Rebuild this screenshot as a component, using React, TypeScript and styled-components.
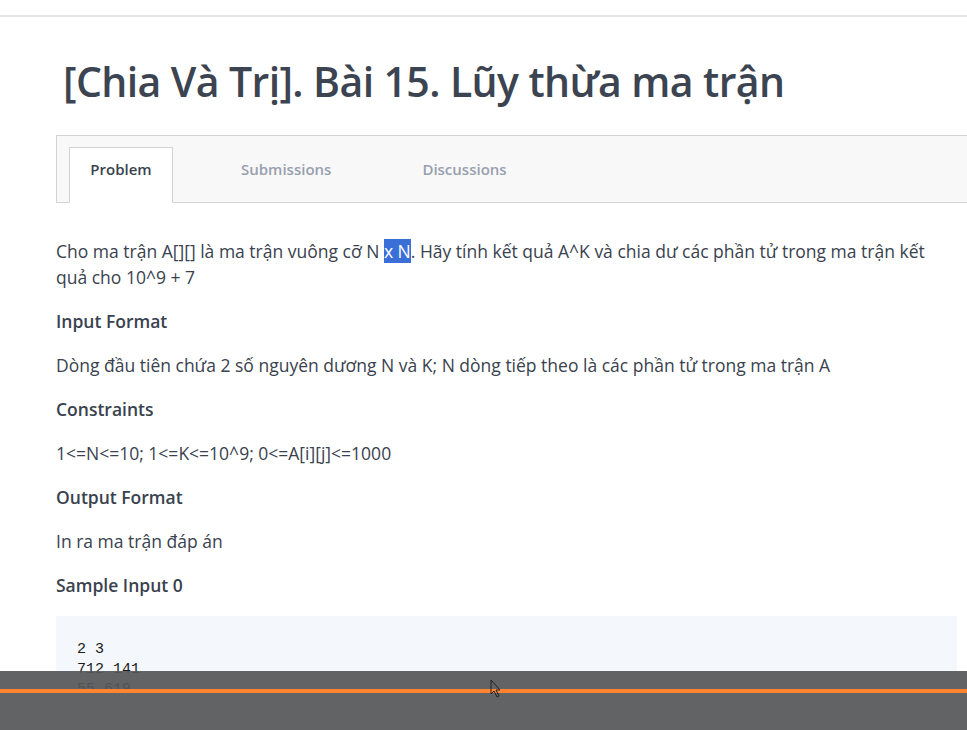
import React from "react";
import styled, { createGlobalStyle } from "styled-components";

const Global = createGlobalStyle`
  html, body { margin: 0; padding: 0; background: #ffffff; }
  body { font-family: "Open Sans", "Noto Sans", sans-serif; overflow: hidden; }
`;

const Page = styled.div`
  width: 967px;
  height: 730px;
  position: relative;
  overflow: hidden;
  background: #fff;
`;

const TopRule = styled.div`
  height: 15px;
  border-bottom: 2px solid #e6e6e6;
`;

const Content = styled.main`
  padding: 0 0 0 56px;
`;

const Title = styled.h1`
  margin: 36px 0 0 7px;
  font-size: 41px;
  font-weight: 600;
  color: #3b4450;
  line-height: 56px;
  letter-spacing: -0.6px;
`;

const TabBar = styled.nav`
  margin-top: 26px;
  height: 66px;
  border: 1px solid #d3d3d3;
  border-right: none;
  background: #f8f8f8;
  display: flex;
  align-items: flex-end;
  padding-left: 12px;
`;

const Tab = styled.div<{ $active?: boolean; $gap?: number }>`
  width: ${(p) => (p.$active ? "104px" : "auto")};
  height: 56px;
  margin-bottom: -1px;
  margin-left: ${(p) => p.$gap ?? 0}px;
  box-sizing: border-box;
  display: flex;
  align-items: center;
  justify-content: center;
  padding-bottom: 12px;
  font-size: 15px;
  font-weight: 600;
  color: ${(p) => (p.$active ? "#39424e" : "#979faf")};
  background: ${(p) => (p.$active ? "#ffffff" : "transparent")};
  border: 1px solid ${(p) => (p.$active ? "#d3d3d3" : "transparent")};
  border-bottom-color: ${(p) => (p.$active ? "#ffffff" : "transparent")};
`;

const Body = styled.section`
  padding-top: 35px;
  padding-right: 10px;
  color: #39424e;
  font-size: 17.5px;
  line-height: 26px;
`;

const Para = styled.p`
  margin: 0 0 18px 0;
`;

const Heading = styled.h3`
  margin: 0 0 18px 0;
  font-size: 17.5px;
  line-height: 26px;
  font-weight: 600;
  color: #39424e;
`;

const Selected = styled.span`
  background: #3a6fd8;
  color: #fff;
`;

const CodeBlock = styled.pre`
  margin: 18px 0 0 0;
  padding: 24px 21px 21px;
  background: #f4f8fc;
  font-family: "Liberation Mono", "DejaVu Sans Mono", monospace;
  font-size: 15px;
  line-height: 20px;
  color: #1a1a1a;
`;

const PlayerBar = styled.div`
  position: absolute;
  left: 0;
  right: 0;
  bottom: 0;
  height: 59px;
  background: rgba(86, 87, 88, 0.93);
`;

const Progress = styled.div`
  position: absolute;
  left: 0;
  right: 0;
  top: 18px;
  height: 4px;
  background: #ff8533;
`;

const Cursor = styled.svg`
  position: absolute;
  left: 490px;
  top: 8px;
`;

export default function App() {
  return (
    <Page>
      <Global />
      <TopRule />
      <Content>
        <Title>[Chia Và Trị]. Bài 15. Lũy thừa ma trận</Title>
        <TabBar>
          <Tab $active>Problem</Tab>
          <Tab $gap={67}>Submissions</Tab>
          <Tab $gap={89}>Discussions</Tab>
        </TabBar>
        <Body>
          <Para>
            Cho ma trận A[][] là ma trận vuông cỡ N <Selected>x N</Selected>. Hãy tính kết quả A^K và chia dư các phần tử trong ma trận kết quả cho 10^9 + 7
          </Para>
          <Heading>Input Format</Heading>
          <Para>Dòng đầu tiên chứa 2 số nguyên dương N và K; N dòng tiếp theo là các phần tử trong ma trận A</Para>
          <Heading>Constraints</Heading>
          <Para>1&lt;=N&lt;=10; 1&lt;=K&lt;=10^9; 0&lt;=A[i][j]&lt;=1000</Para>
          <Heading>Output Format</Heading>
          <Para>In ra ma trận đáp án</Para>
          <Heading>Sample Input 0</Heading>
          <CodeBlock>{"2 3\n712 141\n55 619\n"}</CodeBlock>
        </Body>
      </Content>
      <PlayerBar>
        <Progress />
        <Cursor width="12" height="20" viewBox="0 0 12 20">
          <path d="M1 1 L1 15 L4 12 L7 18 L9 17 L6 11 L10 11 Z" fill="none" stroke="#222" strokeWidth="1" />
        </Cursor>
      </PlayerBar>
    </Page>
  );
}
